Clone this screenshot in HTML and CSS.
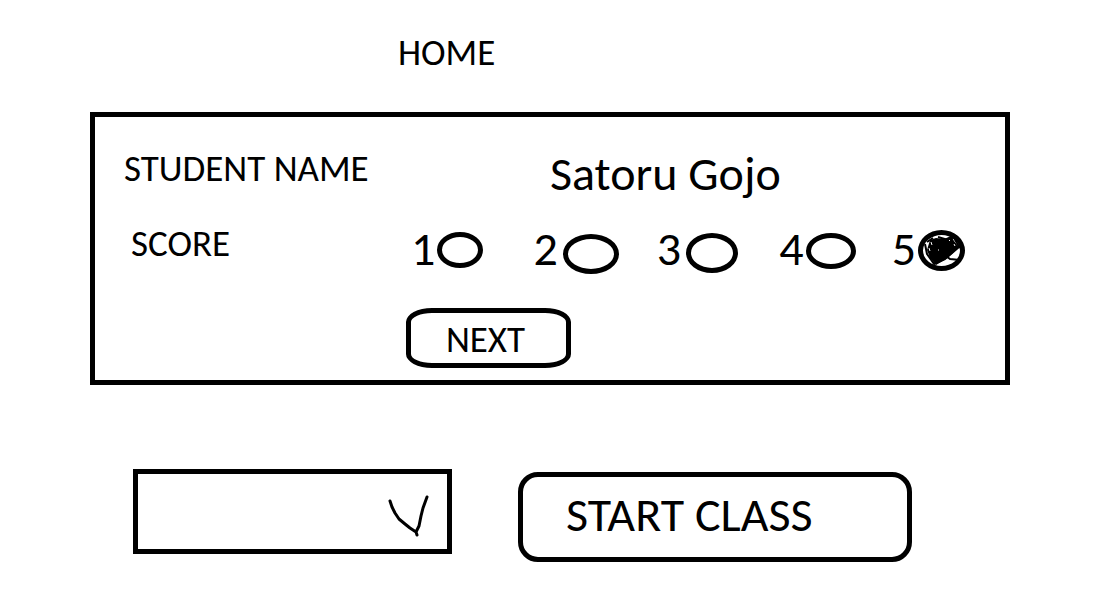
FILE: index.html
```html
<!DOCTYPE html>
<html lang="en">
<head>
<meta charset="utf-8">
<meta name="viewport" content="width=device-width, initial-scale=1">
<title>Home</title>
<link rel="stylesheet" href="styles.css">
</head>
<body>
<main class="page">
  <h1 class="title">HOME</h1>

  <form class="card">
    <span class="label" id="name-label">STUDENT NAME</span>
    <output class="student" aria-labelledby="name-label">Satoru Gojo</output>

    <span class="label label-score" id="score-label">SCORE</span>
    <div class="scores" role="radiogroup" aria-labelledby="score-label">
      <label class="score">1<input class="radio radio-small" type="radio" name="score" value="1"></label>
      <label class="score score-spaced">2<input class="radio radio-large" type="radio" name="score" value="2"></label>
      <label class="score score-spaced">3<input class="radio radio-medium" type="radio" name="score" value="3"></label>
      <label class="score">4<input class="radio radio-flat" type="radio" name="score" value="4"></label>
      <label class="score">5<span class="marked"><input class="radio radio-round" type="radio" name="score" value="5" checked><svg class="scribble" viewBox="0 0 47 41" aria-hidden="true">
        <path class="blot" d="M12 10L18 8L26 9L33 6L36 11L41 17L34 24L28 29L18 35L12 28L9 20Z"/>
        <path class="stroke" d="M7 14L9 24L16 34L27 29L41 17L36 7L30 10L20 7M28 26L32 29L42 30M9 12L15 8M36 8L42 18"/>
        <path class="speck" d="M20 20h1M13 12l1 3M11 18l1 3M31 10l1 1M36 14l1 2"/>
      </svg></span></label>
    </div>

    <button class="button button-next" type="button">NEXT</button>
  </form>

  <div class="actions">
    <div class="picker">
      <select class="select" aria-label="Class"><option></option></select>
      <svg class="chevron" viewBox="0 0 42 44" aria-hidden="true"><path d="M3 7L5 13L8 19L12 25L18 30L23 34L29 38L30 41M29 38L32 32L34 22L36 14L40 3"/></svg>
    </div>
    <button class="button button-start" type="button">START CLASS</button>
  </div>
</main>
</body>
</html>
```
FILE: styles.css
```css
* { box-sizing: border-box; }

body {
  margin: 0;
  background: #fff;
  color: #000;
  font-family: Carlito, Lato, sans-serif;
  font-size: 37px;
  line-height: 40px;
}

.page { padding: 33px 110px 48px 90px; }

.title {
  margin: 0;
  padding: 0 0 39px 308px;
  font-size: 37px;
  font-weight: 400;
}

.card {
  display: grid;
  grid-template-columns: 282fr 559fr;
  row-gap: 25px;
  align-items: start;
  padding: 32px 40px 12px 29px;
  border: 5px solid #000;
}

.label-score { padding-left: 7px; }

.student,
.scores {
  font-size: 48px;
  line-height: 50px;
}

.student { padding-left: 144px; }

.scores {
  display: grid;
  grid-template-columns: 122fr 123fr 122fr 112fr auto;
  padding-left: 5px;
}

.score {
  display: flex;
  align-items: flex-start;
  gap: 2px;
  height: 50px;
}

.score-spaced { gap: 5px; }

.radio {
  appearance: none;
  flex: none;
  margin: 8px 0 0;
  border: 5px solid #000;
  border-radius: 50%;
}

.radio-small { width: 46px; height: 36px; }
.radio-large { width: 56px; height: 40px; margin-top: 10px; }
.radio-medium { width: 52px; height: 40px; margin-top: 9px; }
.radio-flat { width: 50px; height: 36px; margin-top: 9px; }
.radio-round { width: 47px; height: 41px; margin: 0; }

.marked { display: grid; margin-top: 6px; }
.marked > * { grid-area: 1 / 1; }

.scribble {
  width: 47px;
  height: 41px;
  pointer-events: none;
  visibility: hidden;
}

.radio:checked + .scribble { visibility: visible; }

.stroke {
  fill: none;
  stroke: #000;
  stroke-width: 2;
  stroke-linejoin: round;
}

.speck { stroke: #fff; stroke-width: 1; }

.button {
  border: 5px solid #000;
  background: #fff;
  color: #000;
  font-family: inherit;
}

.button-next {
  grid-column: 2;
  width: 165px;
  height: 60px;
  margin-top: 9px;
  padding: 2px 6px 0 0;
  border-radius: 26px / 14px;
  font-size: 37px;
}

.actions {
  display: grid;
  grid-template-columns: 319fr 394fr;
  column-gap: 66px;
  margin-top: 84px;
  padding: 0 98px 0 43px;
}

.picker {
  display: grid;
  align-items: start;
}

.picker > * { grid-area: 1 / 1; }

.select {
  appearance: none;
  width: 100%;
  height: 85px;
  border: 5px solid #000;
  border-radius: 0;
  background: #fff;
  font: inherit;
}

.chevron {
  justify-self: end;
  width: 42px;
  height: 44px;
  margin: 25px 23px 0 0;
  fill: none;
  stroke: #000;
  stroke-width: 3;
  stroke-linecap: round;
  stroke-linejoin: round;
  pointer-events: none;
}

.button-start {
  height: 90px;
  margin-top: 3px;
  padding: 0 0 6px 43px;
  border-radius: 20px;
  font-size: 48px;
  text-align: left;
}
```
